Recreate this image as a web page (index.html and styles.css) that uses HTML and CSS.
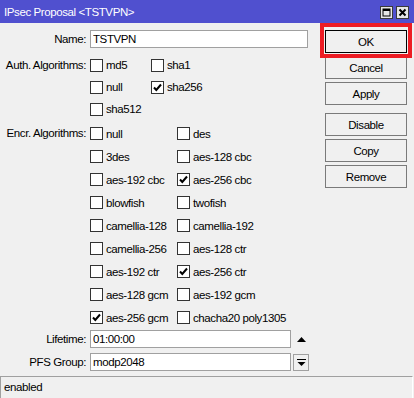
FILE: index.html
```html
<!DOCTYPE html>
<html lang="en">
<head>
    <meta charset="UTF-8">
    <meta name="viewport" content="width=device-width, initial-scale=1.0">
    <title>IPsec Proposal</title>
    <link rel="stylesheet" href="styles.css">
</head>
<body>
    <div class="window">
        <div class="titlebar">
            <span class="title">IPsec Proposal &lt;TSTVPN&gt;</span>
            <div class="title-btns">
                <span class="tbtn">
                    <svg width="9" height="9" viewBox="0 0 9 9"><rect x="1" y="1" width="7" height="7" fill="none" stroke="#000" stroke-width="1"/><rect x="1" y="1" width="7" height="2" fill="#000"/></svg>
                </span>
                <span class="tbtn">
                    <svg width="9" height="9" viewBox="0 0 9 9"><path d="M1.5 1.5 L7.5 7.5 M7.5 1.5 L1.5 7.5" stroke="#000" stroke-width="2"/></svg>
                </span>
            </div>
        </div>

        <div class="content">
            <div class="form">
                <div class="field">
                    <label class="lbl">Name:</label>
                    <input class="textbox wide" type="text" value="TSTVPN" readonly>
                </div>

                <div class="field group auth">
                    <label class="lbl">Auth. Algorithms:</label>
                    <div class="checks auth-checks">
                        <div class="check"><span class="box"></span>md5</div>
                        <div class="check"><span class="box"></span>sha1</div>
                        <div class="check"><span class="box"></span>null</div>
                        <div class="check"><span class="box on"><svg width="11" height="11" viewBox="0 0 11 11"><path d="M2 5.5 L4.3 8 L9 2.5" fill="none" stroke="#000" stroke-width="2"/></svg></span>sha256</div>
                        <div class="check"><span class="box"></span>sha512</div>
                    </div>
                </div>

                <div class="field group encr">
                    <label class="lbl">Encr. Algorithms:</label>
                    <div class="checks encr-checks">
                        <div class="check"><span class="box"></span>null</div>
                        <div class="check"><span class="box"></span>des</div>
                        <div class="check"><span class="box"></span>3des</div>
                        <div class="check"><span class="box"></span>aes-128 cbc</div>
                        <div class="check"><span class="box"></span>aes-192 cbc</div>
                        <div class="check"><span class="box on"><svg width="11" height="11" viewBox="0 0 11 11"><path d="M2 5.5 L4.3 8 L9 2.5" fill="none" stroke="#000" stroke-width="2"/></svg></span>aes-256 cbc</div>
                        <div class="check"><span class="box"></span>blowfish</div>
                        <div class="check"><span class="box"></span>twofish</div>
                        <div class="check"><span class="box"></span>camellia-128</div>
                        <div class="check"><span class="box"></span>camellia-192</div>
                        <div class="check"><span class="box"></span>camellia-256</div>
                        <div class="check"><span class="box"></span>aes-128 ctr</div>
                        <div class="check"><span class="box"></span>aes-192 ctr</div>
                        <div class="check"><span class="box on"><svg width="11" height="11" viewBox="0 0 11 11"><path d="M2 5.5 L4.3 8 L9 2.5" fill="none" stroke="#000" stroke-width="2"/></svg></span>aes-256 ctr</div>
                        <div class="check"><span class="box"></span>aes-128 gcm</div>
                        <div class="check"><span class="box"></span>aes-192 gcm</div>
                        <div class="check"><span class="box on"><svg width="11" height="11" viewBox="0 0 11 11"><path d="M2 5.5 L4.3 8 L9 2.5" fill="none" stroke="#000" stroke-width="2"/></svg></span>aes-256 gcm</div>
                        <div class="check"><span class="box"></span>chacha20 poly1305</div>
                    </div>
                </div>

                <div class="field lifetime">
                    <label class="lbl">Lifetime:</label>
                    <div class="inline">
                        <input class="textbox" type="text" value="01:00:00" readonly>
                        <span class="arrow-up">
                            <svg width="9" height="5" viewBox="0 0 9 5"><path d="M0 5 L4.5 0 L9 5 Z" fill="#000"/></svg>
                        </span>
                    </div>
                </div>

                <div class="field pfs">
                    <label class="lbl">PFS Group:</label>
                    <div class="inline">
                        <input class="textbox" type="text" value="modp2048" readonly>
                        <span class="drop-btn">
                            <svg width="9" height="9" viewBox="0 0 9 9"><rect x="0" y="1" width="9" height="1" fill="#000"/><path d="M0.5 4 L8.5 4 L4.5 8 Z" fill="#000"/></svg>
                        </span>
                    </div>
                </div>
            </div>

            <div class="buttons">
                <button class="btn default">OK</button>
                <button class="btn">Cancel</button>
                <button class="btn">Apply</button>
                <button class="btn spaced">Disable</button>
                <button class="btn">Copy</button>
                <button class="btn">Remove</button>
            </div>
        </div>

        <div class="status">enabled</div>

        <div class="highlight"></div>
    </div>
</body>
</html>
```

FILE: styles.css
```css
* {
    margin: 0;
    padding: 0;
    box-sizing: border-box;
    font-family: 'Liberation Sans', Arial, sans-serif;
}

body {
    width: 414px;
    height: 398px;
    background: #f0f0f0;
    overflow: hidden;
}

.window {
    position: relative;
    height: 398px;
    display: flex;
    flex-direction: column;
    font-size: 11.5px;
    letter-spacing: -0.4px;
    color: #000;
}

.titlebar {
    height: 23px;
    background: #5050cf;
    display: flex;
    align-items: center;
    justify-content: space-between;
    padding: 0 5px 0 4px;
}

.title {
    color: #fff;
}

.title-btns {
    display: flex;
    gap: 3px;
    margin-top: 1px;
}

.tbtn {
    width: 13px;
    height: 13px;
    background: #e6e6e6;
    border: 1px solid #3a3a3a;
    display: flex;
    align-items: center;
    justify-content: center;
}

.content {
    flex: 1;
    display: flex;
}

.form {
    width: 320px;
    padding-top: 7px;
}

.field {
    display: grid;
    grid-template-columns: 86px 1fr;
    column-gap: 4px;
    align-items: start;
}

.lbl {
    text-align: right;
    line-height: 18px;
    white-space: nowrap;
}

.textbox {
    height: 18px;
    border: 1px solid #a0a0a0;
    background: #fff;
    font-size: 11.5px;
    letter-spacing: -0.4px;
    padding: 0 2px;
    color: #000;
    outline: none;
    width: 201px;
}

.textbox.wide {
    width: 218px;
}

.group.auth {
    margin-top: 6px;
}

.group.auth .lbl {
    line-height: 22px;
}

.group.encr {
    margin-top: 2px;
}

.group.encr .lbl {
    line-height: 23px;
}

.checks {
    display: grid;
}

.auth-checks {
    grid-template-columns: 61px auto;
    grid-auto-rows: 22px;
}

.encr-checks {
    grid-template-columns: 87px auto;
    grid-auto-rows: 23px;
}

.check {
    display: flex;
    align-items: center;
    gap: 3px;
    white-space: nowrap;
}

.box {
    width: 13px;
    height: 13px;
    border: 1px solid #333;
    background: #fff;
    display: flex;
    align-items: center;
    justify-content: center;
    flex-shrink: 0;
}

.lifetime {
    margin-top: 1px;
}

.pfs {
    margin-top: 5px;
}

.inline {
    display: flex;
    align-items: center;
}

.arrow-up {
    margin-left: 6px;
    display: flex;
}

.drop-btn {
    width: 16px;
    height: 17px;
    margin-left: 2px;
    border: 1px solid #a0a0a0;
    background: #f0f0f0;
    display: flex;
    align-items: center;
    justify-content: center;
}

.buttons {
    margin-left: 5px;
    padding-top: 7px;
    display: flex;
    flex-direction: column;
    gap: 3px;
    width: 82px;
}

.btn {
    height: 23px;
    background: #f0f0f0;
    border: 1px solid #7a7a7a;
    font-size: 11.5px;
    letter-spacing: -0.4px;
    color: #000;
}

.btn.default {
    border-color: #000;
}

.btn.spaced {
    margin-top: 5px;
}

.status {
    height: 22px;
    border-top: 1px solid #a0a0a0;
    border-left: 1px solid #a0a0a0;
    border-right: 1px solid #fff;
    width: 413px;
    padding-left: 3px;
    line-height: 21px;
}

.highlight {
    position: absolute;
    left: 320px;
    top: 23px;
    width: 92px;
    height: 35px;
    border: 4px solid #ed1c24;
}
```
